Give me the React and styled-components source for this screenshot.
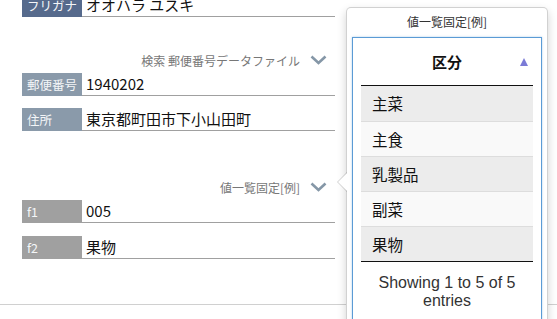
import React from "react";
import styled, { createGlobalStyle } from "styled-components";

const Global = createGlobalStyle`
  html, body { margin: 0; padding: 0; background: #fff; overflow: hidden; }
  body { font-family: "Noto Sans CJK JP", "Noto Sans", sans-serif; width: 557px; height: 319px; }
`;

const Page = styled.div`
  position: relative;
  width: 557px;
  height: 319px;
  overflow: hidden;
`;

const Form = styled.div`
  display: flex;
  flex-direction: column;
  width: 313px;
  padding-left: 22px;
  margin-top: -6px;
`;

const Row = styled.div`
  display: flex;
  height: 23px;
  margin-top: ${(p) => p.$gap || 0}px;
`;

const Label = styled.div`
  width: 60px;
  flex: none;
  background: ${(p) => p.$bg};
  color: #f4f6f8;
  font-size: 12.5px;
  line-height: 23px;
  padding-left: 5px;
  box-sizing: border-box;
  white-space: nowrap;
`;

const Value = styled.div`
  flex: 1;
  border-bottom: 1px solid #a0a0a0;
  font-size: 15px;
  line-height: 22px;
  padding-left: 4px;
  color: #111;
  white-space: nowrap;
`;

const SectionHeader = styled.div`
  display: flex;
  align-items: center;
  justify-content: flex-end;
  height: 20px;
  margin-top: ${(p) => p.$top}px;
  margin-bottom: 3px;
  padding-right: 8px;
  font-size: 12px;
  color: #777;
  gap: 10px;
`;

const Divider = styled.div`
  height: 1px;
  background: #d0d0d0;
  width: 557px;
  margin-top: 45px;
`;

const Popover = styled.div`
  position: absolute;
  left: 346px;
  top: 7px;
  width: 202px;
  height: 340px;
  box-sizing: border-box;
  background: #fff;
  border: 1px solid rgba(0, 0, 0, 0.18);
  border-radius: 5px;
  box-shadow: 0 4px 10px rgba(0, 0, 0, 0.18);
  padding: 0 5px;
  &::before {
    content: "";
    position: absolute;
    left: -10px;
    top: 164px;
    border-style: solid;
    border-width: 10px 10px 10px 0;
    border-color: transparent rgba(0, 0, 0, 0.18) transparent transparent;
  }
  &::after {
    content: "";
    position: absolute;
    left: -9px;
    top: 165px;
    border-style: solid;
    border-width: 9px 9px 9px 0;
    border-color: transparent #fff transparent transparent;
  }
`;

const PopTitle = styled.div`
  text-align: center;
  font-size: 12px;
  color: #333;
  line-height: 14px;
  padding: 7px 0 8px;
`;

const Inner = styled.div`
  border: 1px solid #5b9bd5;
  box-shadow: 0 0 2px rgba(91, 155, 213, 0.5);
  padding: 0 8px;
  height: 300px;
`;

const Table = styled.div`
  display: flex;
  flex-direction: column;
`;

const Head = styled.div`
  position: relative;
  height: 47px;
  border-bottom: 1px solid #111;
  display: flex;
  align-items: center;
  justify-content: center;
  font-weight: bold;
  font-size: 15px;
  color: #111;
`;

const SortArrow = styled.span`
  position: absolute;
  right: 5px;
  top: 20px;
  width: 0;
  height: 0;
  border-style: solid;
  border-width: 0 4.5px 8px 4.5px;
  border-color: transparent transparent #7b7bd6 transparent;
`;

const Cell = styled.div`
  height: 35px;
  box-sizing: border-box;
  background: ${(p) => (p.$odd ? "#ececec" : "#f9f9f9")};
  border-top: ${(p) => (p.$first ? "none" : "1px solid #dddddd")};
  font-size: 15.5px;
  line-height: 34px;
  padding-left: 11px;
  color: #111;
`;

const TableEnd = styled.div`
  border-top: 1px solid #111;
`;

const Info = styled.div`
  font-family: "Liberation Sans", Arial, sans-serif;
  font-size: 16px;
  line-height: 18px;
  color: #333;
  text-align: center;
  padding: 12px 4px 0;
`;

const Chevron = () => (
  <svg width="17" height="10" viewBox="0 0 17 10">
    <path d="M1.5 1.5 L8.5 8 L15.5 1.5" fill="none" stroke="#8597a7" strokeWidth="2.6" />
  </svg>
);

const items = ["主菜", "主食", "乳製品", "副菜", "果物"];

export default function App() {
  return (
    <Page>
      <Global />
      <Form>
        <Row>
          <Label $bg="#566a8c">フリガナ</Label>
          <Value>オオハラ ユスキ</Value>
        </Row>
        <SectionHeader $top={33}>
          <span>検索 郵便番号データファイル</span>
          <Chevron />
        </SectionHeader>
        <Row>
          <Label $bg="#8a9aaa">郵便番号</Label>
          <Value>1940202</Value>
        </Row>
        <Row $gap={12}>
          <Label $bg="#8a9aaa">住所</Label>
          <Value>東京都町田市下小山田町</Value>
        </Row>
        <SectionHeader $top={46}>
          <span>値一覧固定[例]</span>
          <Chevron />
        </SectionHeader>
        <Row>
          <Label $bg="#a0a0a0">f1</Label>
          <Value>005</Value>
        </Row>
        <Row $gap={13}>
          <Label $bg="#a0a0a0">f2</Label>
          <Value>果物</Value>
        </Row>
      </Form>
      <Divider />
      <Popover>
        <PopTitle>値一覧固定[例]</PopTitle>
        <Inner>
          <Table>
            <Head>
              区分
              <SortArrow />
            </Head>
            {items.map((t, i) => (
              <Cell key={t} $odd={i % 2 === 0} $first={i === 0}>
                {t}
              </Cell>
            ))}
            <TableEnd />
          </Table>
          <Info>Showing 1 to 5 of 5 entries</Info>
        </Inner>
      </Popover>
    </Page>
  );
}
